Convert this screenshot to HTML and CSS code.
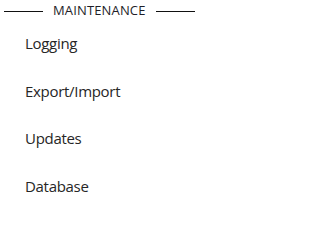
FILE: index.html
```html
<!DOCTYPE html>
<html>
<head>
<meta charset="utf-8">
<link rel="stylesheet" href="styles.css">
</head>
<body>
<div class="menu">
  <div class="heading"><span class="rule"></span><span class="label">MAINTENANCE</span><span class="rule"></span></div>
  <ul class="items">
    <li>Logging</li>
    <li>Export/Import</li>
    <li>Updates</li>
    <li>Database</li>
  </ul>
</div>
</body>
</html>
```
FILE: styles.css
```css
html, body { margin: 0; padding: 0; background: #fff; }
body { font-family: "Open Sans", sans-serif; color: #222; }
.menu { width: 214px; padding-top: 3px; }
.heading { display: flex; align-items: center; padding-left: 4px; gap: 10px; height: 17px; }
.rule { width: 39px; height: 1px; background: #111; flex: none; }
.label { font-size: 13px; color: #1e1e28; letter-spacing: 0.15px; margin-bottom: 3px; }
.items { list-style: none; margin: 0; padding: 0 0 0 25px; }
.items li { font-size: 15px; line-height: 20px; padding-top: 13.83px; padding-bottom: 13.83px; color: #262626; letter-spacing: -0.3px; }
.items li:first-child { padding-top: 13px; }
```
